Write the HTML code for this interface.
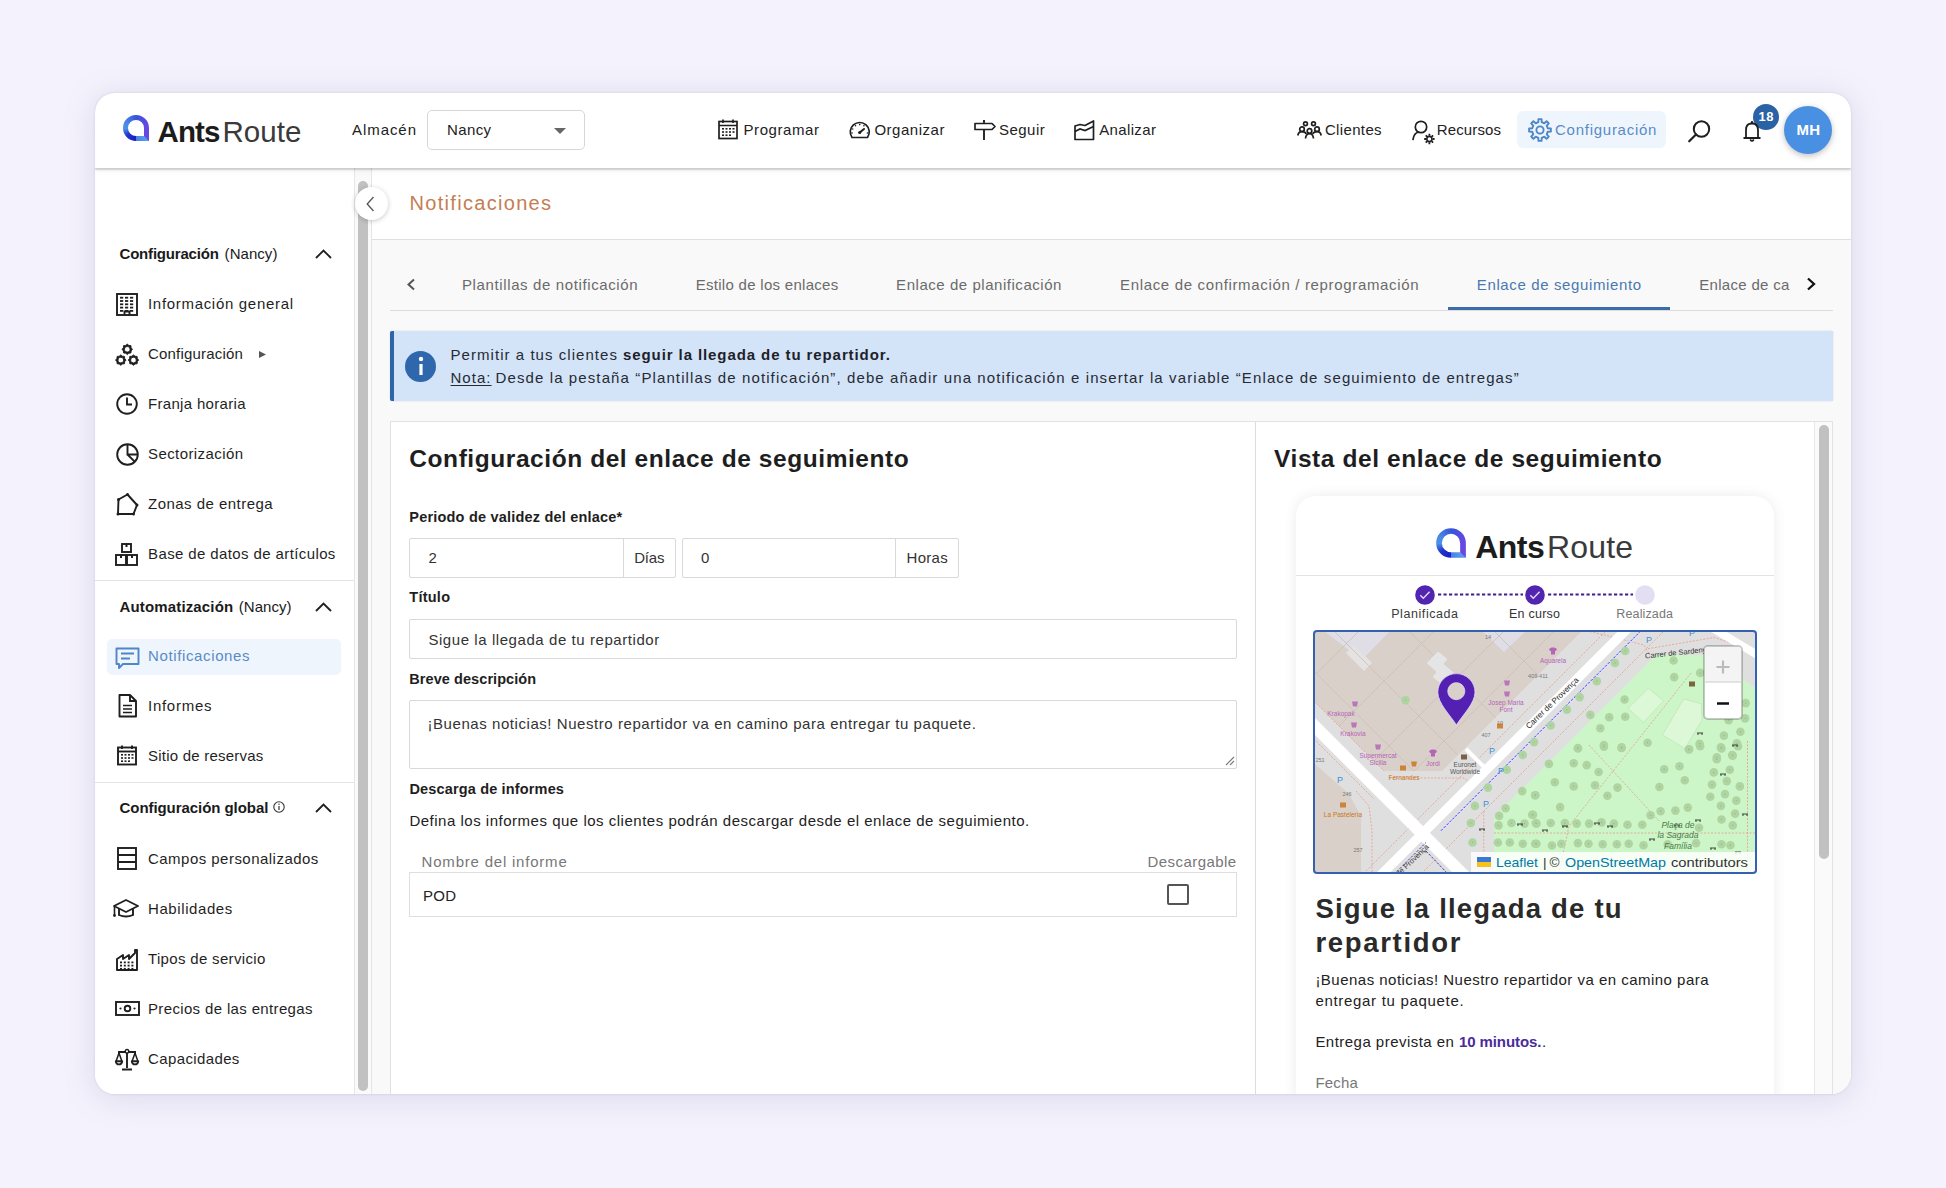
<!DOCTYPE html>
<html><head><meta charset="utf-8">
<style>
*{box-sizing:border-box;margin:0;padding:0}
html,body{width:1946px;height:1188px;overflow:hidden;background:#f4f2fc;font-family:"Liberation Sans",sans-serif;color:#1f1f1f}
.t{position:absolute;white-space:pre;line-height:1;z-index:10}
.ic{position:absolute;overflow:visible;z-index:10}
.box{position:absolute;z-index:6}
#card{position:absolute;left:95px;top:93px;width:1756px;height:1001px;background:#fff;border-radius:20px;overflow:hidden;box-shadow:0 0 2.5px rgba(70,60,100,0.16),0 4px 30px rgba(150,140,190,0.25)}
#hdr{position:absolute;left:95px;top:93px;width:1756px;height:75px;background:#fff;box-shadow:0 1.5px 1.5px rgba(0,0,0,0.16),0 3px 6px rgba(0,0,0,0.05);z-index:5;border-radius:20px 20px 0 0}
#side{position:absolute;left:0;top:75px;width:260px;height:926px;background:#fff}
#strack{position:absolute;left:259px;top:75px;width:18px;height:926px;background:#fafafa;border-left:1px solid #e6e6e6;border-right:1px solid #e6e6e6}
#sthumb{position:absolute;left:263px;top:88px;width:10px;height:910px;background:#c1c1c1;border-radius:5px}
#content{position:absolute;left:277px;top:75px;width:1479px;height:926px;background:#f9f9f9}
#chead{position:absolute;left:0;top:0;width:1479px;height:72px;background:#fff;border-bottom:1px solid #e0e0e0}
#clip{position:absolute;left:95px;top:93px;width:1756px;height:1001px;overflow:hidden;border-radius:20px;z-index:3}
#inner{position:absolute;left:-95px;top:-93px;width:1946px;height:1188px}
</style></head>
<body>
<div id="card">
  <div id="side"></div>
  <div id="strack"></div>
  <div id="sthumb"></div>
  <div id="content">
    <div id="chead"></div>
  </div>
</div>
<div id="clip"><div id="inner">
<div id="hdr"></div>
<div class="box" style="left:122px;top:114px;width:28px;height:28px;background:conic-gradient(from 0deg at 50% 50%, #3556d8 0deg, #5a4be0 55deg, #6748e2 90deg, #6748e2 134deg, #5b9cee 136deg, #4a7fe6 178deg, #1a1dc6 181deg, #2233cc 230deg, #4a93e8 268deg, #4a86e4 300deg, #3556d8 360deg);clip-path:path(evenodd, 'M14.00 1.00A13.00 13.00 0 0 0 1.00 14.00A13.00 13.00 0 0 0 14.00 27.00H27.00V14.00A13.00 13.00 0 0 0 14.00 1.00ZM14.00 6.00A8.00 8.00 0 0 0 6.00 14.00A8.00 8.00 0 0 0 14.00 22.00H22.00V14.00A8.00 8.00 0 0 0 14.00 6.00Z');z-index:11"></div><div class="t" style="left:157.5px;top:117.4px;font-size:29.5px;font-weight:700;color:#1c1c1c;letter-spacing:-0.92px;">Ants</div><div class="t" style="left:222.5px;top:117.4px;font-size:29.5px;font-weight:400;color:#3a3a3a;letter-spacing:0.07px;">Route</div><div class="t" style="left:352.0px;top:122.3px;font-size:15px;font-weight:400;color:#222;letter-spacing:0.94px;">Almac&eacute;n</div><div class="box" style="left:427px;top:110px;width:158px;height:40px;border:1px solid #d6d6d6;border-radius:5px;background:#fff"></div><div class="t" style="left:447.0px;top:122.3px;font-size:15px;font-weight:400;color:#222;letter-spacing:0.37px;">Nancy</div><svg class="ic" style="left:554px;top:128px;" width="12" height="6" viewBox="0 0 12 6"><path d="M0 0H12L6 6Z" fill="#666"/></svg><svg class="ic" style="left:718px;top:119px;" width="20" height="21" viewBox="0 0 20 21"><rect x="1" y="2.5" width="18" height="17" fill="none" stroke="#1f1f1f" stroke-width="1.7"/><path d="M1 6.5H19" fill="none" stroke="#1f1f1f" stroke-width="1.7"/><path d="M5 0.5V4M15 0.5V4" fill="none" stroke="#1f1f1f" stroke-width="1.7"/>
<g fill="#1f1f1f"><rect x="4" y="9" width="2" height="1.6"/><rect x="7.5" y="9" width="2" height="1.6"/><rect x="11" y="9" width="2" height="1.6"/><rect x="14.5" y="9" width="2" height="1.6"/>
<rect x="4" y="12.2" width="2" height="1.6"/><rect x="7.5" y="12.2" width="2" height="1.6"/><rect x="11" y="12.2" width="2" height="1.6"/><rect x="14.5" y="12.2" width="2" height="1.6"/>
<rect x="4" y="15.4" width="2" height="1.6"/><rect x="7.5" y="15.4" width="2" height="1.6"/><rect x="11" y="15.4" width="2" height="1.6"/></g></svg><div class="t" style="left:743.5px;top:122.0px;font-size:15px;font-weight:400;color:#222;letter-spacing:0.58px;">Programar</div><svg class="ic" style="left:849px;top:121px;" width="22" height="18" viewBox="0 0 22 18"><path d="M3 16.5A9.5 9.5 0 1 1 18.5 16.5Z" fill="none" stroke="#1f1f1f" stroke-width="1.7" stroke-linejoin="round"/><path d="M10.7 11.5L15 8" stroke="#1f1f1f" stroke-width="2" stroke-linecap="round"/><circle cx="10.7" cy="11.5" r="1.6" fill="#1f1f1f"/>
<g fill="#1f1f1f"><circle cx="10.7" cy="3.6" r=".8"/><circle cx="6.5" cy="4.8" r=".8"/><circle cx="14.9" cy="4.8" r=".8"/><circle cx="3.7" cy="8" r=".8"/><circle cx="3" cy="12" r=".8"/><circle cx="18.4" cy="12" r=".8"/></g></svg><svg class="ic" style="left:974px;top:120px;" width="22" height="20" viewBox="0 0 22 20"><path d="M1 3.5H18L21 6.5L18 9.5H1Z" fill="none" stroke="#1f1f1f" stroke-width="1.7" stroke-linejoin="round"/><path d="M10 0V3.5M10 9.5V20" stroke="#1f1f1f" stroke-width="1.9"/></svg><div class="t" style="left:999.0px;top:122.1px;font-size:15px;font-weight:400;color:#222;letter-spacing:0.47px;">Seguir</div><svg class="ic" style="left:1074px;top:120px;" width="21" height="21" viewBox="0 0 21 21"><path d="M1 6L6 4.5L11 5.5L19.5 1V19.5H1Z" fill="none" stroke="#1f1f1f" stroke-width="1.7" stroke-linejoin="round"/><path d="M1 11.5L6 9L11 10.5L19.5 6.5" fill="none" stroke="#1f1f1f" stroke-width="1.7"/></svg><div class="t" style="left:874.4px;top:122.0px;font-size:15px;font-weight:400;color:#222;letter-spacing:0.52px;">Organizar</div><div class="t" style="left:1099.2px;top:122.1px;font-size:15px;font-weight:400;color:#222;letter-spacing:0.36px;">Analizar</div><svg class="ic" style="left:1297px;top:121px;" width="25" height="18" viewBox="0 0 25 18"><g fill="none" stroke="#1f1f1f" stroke-width="1.7"><circle cx="8.5" cy="2.8" r="1.9"/><circle cx="16.5" cy="2.8" r="1.9"/><circle cx="5" cy="8.2" r="2.3"/><circle cx="12.5" cy="10" r="2.3"/><circle cx="20" cy="8.2" r="2.3"/>
<path d="M0.8 14.5Q1.5 10.7 5 10.7Q8.5 10.7 9.2 13"/><path d="M24.2 14.5Q23.5 10.7 20 10.7Q16.5 10.7 15.8 13"/><path d="M8.5 17.5Q9 12.7 12.5 12.7Q16 12.7 16.5 17.5"/></g></svg><div class="t" style="left:1324.9px;top:121.8px;font-size:15px;font-weight:400;color:#222;letter-spacing:0.36px;">Clientes</div><svg class="ic" style="left:1412px;top:120px;" width="24" height="25" viewBox="0 0 24 25"><circle cx="9" cy="7" r="5.7" fill="none" stroke="#1f1f1f" stroke-width="1.7"/><path d="M1 19.5Q2 13 6.5 12" fill="none" stroke="#1f1f1f" stroke-width="1.7" stroke-linecap="round"/>
<g transform="translate(17.4,19)"><circle r="2.6" fill="none" stroke="#1f1f1f" stroke-width="1.6"/><g stroke="#1f1f1f" stroke-width="1.8"><path d="M0 -5.2V-3.3M0 3.3V5.2M-5.2 0H-3.3M3.3 0H5.2M-3.7 -3.7L-2.4 -2.4M2.4 2.4L3.7 3.7M-3.7 3.7L-2.4 2.4M2.4 -2.4L3.7 -3.7"/></g></g></svg><div class="t" style="left:1436.8px;top:121.8px;font-size:15px;font-weight:400;color:#222;letter-spacing:0.12px;">Recursos</div><div class="box" style="left:1517px;top:111px;width:149px;height:37px;background:#eef5fd;border-radius:6px"></div><svg class="ic" style="left:1528px;top:118px;" width="24" height="24" viewBox="0 0 24 24"><path d="M10.29 4.19 L10.45 1.11 L13.55 1.11 L13.71 4.19 L16.31 5.26 L18.60 3.20 L20.80 5.40 L18.74 7.69 L19.81 10.29 L22.89 10.45 L22.89 13.55 L19.81 13.71 L18.74 16.31 L20.80 18.60 L18.60 20.80 L16.31 18.74 L13.71 19.81 L13.55 22.89 L10.45 22.89 L10.29 19.81 L7.69 18.74 L5.40 20.80 L3.20 18.60 L5.26 16.31 L4.19 13.71 L1.11 13.55 L1.11 10.45 L4.19 10.29 L5.26 7.69 L3.20 5.40 L5.40 3.20 L7.69 5.26Z" fill="none" stroke="#4f86c6" stroke-width="1.9" stroke-linejoin="round"/><circle cx="12" cy="12" r="3.6" fill="none" stroke="#4f86c6" stroke-width="1.9"/></svg><div class="t" style="left:1555.0px;top:122.3px;font-size:15px;font-weight:400;color:#5a8bc8;letter-spacing:0.74px;">Configuraci&oacute;n</div><svg class="ic" style="left:1688px;top:120px;" width="23" height="23" viewBox="0 0 23 23"><circle cx="13.5" cy="9" r="7.7" fill="none" stroke="#1f1f1f" stroke-width="2"/><path d="M8 14.5L1.2 21.3" stroke="#1f1f1f" stroke-width="2.2" stroke-linecap="round"/></svg><svg class="ic" style="left:1743px;top:120px;" width="18" height="23" viewBox="0 0 18 23"><path d="M3 17.5V10Q3 3.5 9 3.5Q15 3.5 15 10V17.5" fill="none" stroke="#1f1f1f" stroke-width="1.8"/><path d="M0.5 18H17.5" stroke="#1f1f1f" stroke-width="1.8"/><circle cx="9" cy="2.3" r="1.2" fill="#1f1f1f"/><path d="M7.2 19.5Q9 22.5 10.8 19.5" fill="none" stroke="#1f1f1f" stroke-width="1.6"/></svg><div class="box" style="left:1753px;top:104px;width:26px;height:26px;border-radius:50%;background:#2a62a6"></div><div class="t" style="left:1758.5px;top:109.6px;font-size:13px;font-weight:700;color:#fff;letter-spacing:0.53px;">18</div><div class="box" style="left:1784px;top:106px;width:48px;height:48px;border-radius:50%;background:#4a90e2;box-shadow:0 2px 6px rgba(0,0,0,0.25)"></div><div class="t" style="left:1796.5px;top:122.1px;font-size:15px;font-weight:700;color:#fff;letter-spacing:0.17px;">MH</div>
<div class="t" style="left:119.5px;top:246.0px;font-size:15px;font-weight:700;color:#1a1a1a;letter-spacing:-0.19px;">Configuraci&oacute;n</div><div class="t" style="left:224.6px;top:246.0px;font-size:15px;font-weight:400;color:#1a1a1a;letter-spacing:0.05px;">(Nancy)</div><svg class="ic" style="left:315px;top:248.7px;" width="17" height="10" viewBox="0 0 17 10"><path d="M1 9L8.5 1.5L16 9" fill="none" stroke="#1f1f1f" stroke-width="1.8"/></svg><div class="t" style="left:148.0px;top:296.1px;font-size:15px;font-weight:400;color:#1f1f1f;letter-spacing:0.69px;">Informaci&oacute;n general</div><div class="t" style="left:148.0px;top:346.1px;font-size:15px;font-weight:400;color:#1f1f1f;letter-spacing:0.20px;">Configuraci&oacute;n</div><div class="t" style="left:148.0px;top:396.1px;font-size:15px;font-weight:400;color:#1f1f1f;letter-spacing:0.32px;">Franja horaria</div><div class="t" style="left:148.0px;top:446.1px;font-size:15px;font-weight:400;color:#1f1f1f;letter-spacing:0.42px;">Sectorizaci&oacute;n</div><div class="t" style="left:148.0px;top:496.1px;font-size:15px;font-weight:400;color:#1f1f1f;letter-spacing:0.47px;">Zonas de entrega</div><div class="t" style="left:148.0px;top:546.1px;font-size:15px;font-weight:400;color:#1f1f1f;letter-spacing:0.39px;">Base de datos de art&iacute;culos</div><div class="box" style="left:95px;top:580px;width:259px;height:1px;background:#e3e3e3"></div><div class="t" style="left:119.5px;top:598.9px;font-size:15px;font-weight:700;color:#1a1a1a;letter-spacing:0.15px;">Automatizaci&oacute;n</div><div class="t" style="left:238.8px;top:598.9px;font-size:15px;font-weight:400;color:#1a1a1a;letter-spacing:0.03px;">(Nancy)</div><svg class="ic" style="left:315px;top:601.6px;" width="17" height="10" viewBox="0 0 17 10"><path d="M1 9L8.5 1.5L16 9" fill="none" stroke="#1f1f1f" stroke-width="1.8"/></svg><div class="box" style="left:107px;top:639px;width:234px;height:36px;background:#eef5fd;border-radius:5px"></div><div class="t" style="left:148.0px;top:648.1px;font-size:15px;font-weight:400;color:#5a8bc8;letter-spacing:0.63px;">Notificaciones</div><div class="t" style="left:148.0px;top:698.1px;font-size:15px;font-weight:400;color:#1f1f1f;letter-spacing:0.73px;">Informes</div><div class="t" style="left:148.0px;top:748.1px;font-size:15px;font-weight:400;color:#1f1f1f;letter-spacing:0.22px;">Sitio de reservas</div><div class="box" style="left:95px;top:782px;width:259px;height:1px;background:#e3e3e3"></div><div class="t" style="left:119.5px;top:800.0px;font-size:15px;font-weight:700;color:#1a1a1a;letter-spacing:-0.06px;">Configuraci&oacute;n global</div><svg class="ic" style="left:315px;top:802.7px;" width="17" height="10" viewBox="0 0 17 10"><path d="M1 9L8.5 1.5L16 9" fill="none" stroke="#1f1f1f" stroke-width="1.8"/></svg><svg class="ic" style="left:273px;top:801px;" width="12" height="12" viewBox="0 0 12 12"><circle cx="6" cy="6" r="5.2" fill="none" stroke="#333" stroke-width="1.1"/><path d="M6 5V9" stroke="#333" stroke-width="1.2"/><circle cx="6" cy="3.3" r=".7" fill="#333"/></svg><div class="t" style="left:148.0px;top:850.8px;font-size:15px;font-weight:400;color:#1f1f1f;letter-spacing:0.47px;">Campos personalizados</div><div class="t" style="left:148.0px;top:900.8px;font-size:15px;font-weight:400;color:#1f1f1f;letter-spacing:0.59px;">Habilidades</div><div class="t" style="left:148.0px;top:950.8px;font-size:15px;font-weight:400;color:#1f1f1f;letter-spacing:0.33px;">Tipos de servicio</div><div class="t" style="left:148.0px;top:1000.8px;font-size:15px;font-weight:400;color:#1f1f1f;letter-spacing:0.35px;">Precios de las entregas</div><div class="t" style="left:148.0px;top:1050.8px;font-size:15px;font-weight:400;color:#1f1f1f;letter-spacing:0.38px;">Capacidades</div><svg class="ic" style="left:116px;top:293px;" width="22" height="23" viewBox="0 0 22 23"><rect x="1" y="1" width="20" height="21" fill="none" stroke="#1f1f1f" stroke-width="1.9"/><g fill="#1f1f1f"><rect x="4" y="3.8" width="3.2" height="1.8"/><rect x="9" y="3.8" width="3.2" height="1.8"/><rect x="14" y="3.8" width="3.2" height="1.8"/><rect x="4" y="7.1" width="3.2" height="1.8"/><rect x="9" y="7.1" width="3.2" height="1.8"/><rect x="14" y="7.1" width="3.2" height="1.8"/><rect x="4" y="10.399999999999999" width="3.2" height="1.8"/><rect x="9" y="10.399999999999999" width="3.2" height="1.8"/><rect x="14" y="10.399999999999999" width="3.2" height="1.8"/><rect x="4" y="13.7" width="3.2" height="1.8"/><rect x="9" y="13.7" width="3.2" height="1.8"/><rect x="14" y="13.7" width="3.2" height="1.8"/><rect x="4" y="17.0" width="3.2" height="1.8"/><rect x="9" y="17.0" width="3.2" height="1.8"/><rect x="14" y="17.0" width="3.2" height="1.8"/></g><path d="M8.5 22V18.5H13.5V22" fill="none" stroke="#1f1f1f" stroke-width="1.9"/></svg><svg class="ic" style="left:116px;top:343px;" width="23" height="23" viewBox="0 0 23 23"><path d="M11.25 1.10 L12.86 2.42 L14.93 2.62 L15.13 4.69 L16.45 6.30 L15.13 7.91 L14.93 9.98 L12.86 10.18 L11.25 11.50 L9.64 10.18 L7.57 9.98 L7.37 7.91 L6.05 6.30 L7.37 4.69 L7.57 2.62 L9.64 2.42ZM11.25 3.5A2.8 2.8 0 1 0 11.26 3.5Z" fill="#1f1f1f" fill-rule="evenodd" stroke="#1f1f1f" stroke-width="0.9" stroke-linejoin="round"/><path d="M4.80 11.90 L6.41 13.22 L8.48 13.42 L8.68 15.49 L10.00 17.10 L8.68 18.71 L8.48 20.78 L6.41 20.98 L4.80 22.30 L3.19 20.98 L1.12 20.78 L0.92 18.71 L-0.40 17.10 L0.92 15.49 L1.12 13.42 L3.19 13.22ZM4.8 14.3A2.8 2.8 0 1 0 4.81 14.3Z" fill="#1f1f1f" fill-rule="evenodd" stroke="#1f1f1f" stroke-width="0.9" stroke-linejoin="round"/><path d="M17.45 11.90 L19.06 13.22 L21.13 13.42 L21.33 15.49 L22.65 17.10 L21.33 18.71 L21.13 20.78 L19.06 20.98 L17.45 22.30 L15.84 20.98 L13.77 20.78 L13.57 18.71 L12.25 17.10 L13.57 15.49 L13.77 13.42 L15.84 13.22ZM17.45 14.3A2.8 2.8 0 1 0 17.46 14.3Z" fill="#1f1f1f" fill-rule="evenodd" stroke="#1f1f1f" stroke-width="0.9" stroke-linejoin="round"/></svg><svg class="ic" style="left:258px;top:350px;" width="9" height="9" viewBox="0 0 9 9"><path d="M1 1L8 4.5L1 8Z" fill="#555"/></svg><svg class="ic" style="left:116px;top:393px;" width="22" height="22" viewBox="0 0 22 22"><circle cx="11" cy="11" r="9.8" fill="none" stroke="#1f1f1f" stroke-width="1.9"/><path d="M11 4.5V11.5H16" fill="none" stroke="#1f1f1f" stroke-width="1.9"/></svg><svg class="ic" style="left:116px;top:443px;" width="23" height="23" viewBox="0 0 23 23"><circle cx="11.5" cy="11.5" r="10.3" fill="none" stroke="#1f1f1f" stroke-width="1.9"/><path d="M11.5 1.2V11.5H21.8M11.5 11.5L18.7 18.7" fill="none" stroke="#1f1f1f" stroke-width="1.9"/></svg><svg class="ic" style="left:116px;top:493px;" width="23" height="23" viewBox="0 0 23 23"><path d="M2 21L2.5 6.5L11.5 1.5L21 12L17.5 21Z" fill="none" stroke="#1f1f1f" stroke-width="1.9" stroke-linejoin="round"/><g fill="#1f1f1f"><circle cx="2" cy="21" r="1.5"/><circle cx="2.5" cy="6.5" r="1.5"/><circle cx="11.5" cy="1.5" r="1.5"/><circle cx="21" cy="12" r="1.5"/><circle cx="17.5" cy="21" r="1.5"/></g></svg><svg class="ic" style="left:115px;top:543px;" width="24" height="24" viewBox="0 0 24 24"><g fill="none" stroke="#1f1f1f" stroke-width="1.9"><rect x="7" y="1" width="9" height="8"/><rect x="1" y="12" width="10" height="10"/><rect x="12" y="12" width="10" height="10"/></g><g fill="#1f1f1f"><rect x="10.5" y="1" width="2" height="3"/><rect x="5" y="12" width="2" height="3"/><rect x="16" y="12" width="2" height="3"/></g></svg><svg class="ic" style="left:115px;top:647px;" width="25" height="23" viewBox="0 0 25 23"><path d="M1.5 1.5H23.5V17H8L4 21V17H1.5Z" fill="none" stroke="#4f86c6" stroke-width="1.9" stroke-linejoin="round"/><path d="M6 6.5H19M6 11.5H15" stroke="#4f86c6" stroke-width="1.9"/></svg><svg class="ic" style="left:118px;top:694px;" width="20" height="24" viewBox="0 0 20 24"><path d="M1.5 1H12L18 7V22.5H1.5Z" fill="none" stroke="#1f1f1f" stroke-width="1.9" stroke-linejoin="round"/><path d="M12 1V7H18" fill="none" stroke="#1f1f1f" stroke-width="1.9"/><path d="M5 11.5H14M5 15H14M5 18.5H14" stroke="#1f1f1f" stroke-width="1.5"/></svg><svg class="ic" style="left:117px;top:745px;" width="20" height="21" viewBox="0 0 20 21"><rect x="1" y="2.5" width="18" height="17" fill="none" stroke="#1f1f1f" stroke-width="1.9"/><path d="M1 6.5H19" fill="none" stroke="#1f1f1f" stroke-width="1.9"/><path d="M5 0.5V4M15 0.5V4" fill="none" stroke="#1f1f1f" stroke-width="1.9"/>
<g fill="#1f1f1f"><rect x="4" y="9" width="2" height="1.6"/><rect x="7.5" y="9" width="2" height="1.6"/><rect x="11" y="9" width="2" height="1.6"/><rect x="14.5" y="9" width="2" height="1.6"/>
<rect x="4" y="12.2" width="2" height="1.6"/><rect x="7.5" y="12.2" width="2" height="1.6"/><rect x="11" y="12.2" width="2" height="1.6"/><rect x="14.5" y="12.2" width="2" height="1.6"/>
<rect x="4" y="15.4" width="2" height="1.6"/><rect x="7.5" y="15.4" width="2" height="1.6"/><rect x="11" y="15.4" width="2" height="1.6"/></g></svg><svg class="ic" style="left:117px;top:847px;" width="20" height="23" viewBox="0 0 20 23"><rect x="1" y="1" width="18" height="21" fill="none" stroke="#1f1f1f" stroke-width="1.9"/><path d="M1 8H19M1 15H19" fill="none" stroke="#1f1f1f" stroke-width="1.9"/></svg><svg class="ic" style="left:113px;top:898px;" width="26" height="20" viewBox="0 0 26 20"><path d="M1 8L13 2L25 8L13 14Z" fill="none" stroke="#1f1f1f" stroke-width="1.9" stroke-linejoin="round"/><path d="M6 11V17Q13 20 20 17V11" fill="none" stroke="#1f1f1f" stroke-width="1.9"/><path d="M1.5 8.5V17" stroke="#1f1f1f" stroke-width="1.6"/><circle cx="1.5" cy="17.5" r="1.4" fill="#1f1f1f"/></svg><svg class="ic" style="left:116px;top:949px;" width="23" height="23" viewBox="0 0 23 23"><path d="M1 21V10L7 6V10L13 6V10L19 4V1H21V21Z" fill="none" stroke="#1f1f1f" stroke-width="1.9" stroke-linejoin="round"/><g fill="#1f1f1f"><rect x="4.0" y="12.5" width="2" height="1.8"/><rect x="7.8" y="12.5" width="2" height="1.8"/><rect x="11.6" y="12.5" width="2" height="1.8"/><rect x="15.399999999999999" y="12.5" width="2" height="1.8"/><rect x="4.0" y="15.7" width="2" height="1.8"/><rect x="7.8" y="15.7" width="2" height="1.8"/><rect x="11.6" y="15.7" width="2" height="1.8"/><rect x="15.399999999999999" y="15.7" width="2" height="1.8"/><rect x="4.0" y="18.9" width="2" height="1.8"/><rect x="7.8" y="18.9" width="2" height="1.8"/><rect x="11.6" y="18.9" width="2" height="1.8"/><rect x="15.399999999999999" y="18.9" width="2" height="1.8"/></g></svg><svg class="ic" style="left:115px;top:1001px;" width="25" height="15" viewBox="0 0 25 15"><rect x="1" y="1" width="23" height="13" fill="none" stroke="#1f1f1f" stroke-width="1.9"/><circle cx="12.5" cy="7.5" r="2.8" fill="none" stroke="#1f1f1f" stroke-width="1.9"/><circle cx="5.5" cy="7.5" r="1.1" fill="#1f1f1f"/><circle cx="19.5" cy="7.5" r="1.1" fill="#1f1f1f"/></svg><svg class="ic" style="left:115px;top:1048px;" width="24" height="22" viewBox="0 0 24 22"><path d="M12 3V20M7 21.5H17M3 4H21" fill="none" stroke="#1f1f1f" stroke-width="1.9"/><circle cx="12" cy="3.3" r="1.8" fill="#fff" stroke="#1f1f1f" stroke-width="1.4"/><path d="M4 5L1.2 13M4 5L6.8 13M20 5L17.2 13M20 5L22.8 13" stroke="#1f1f1f" stroke-width="1.5"/><path d="M0.8 13.2A3.2 3.2 0 0 0 7.2 13.2ZM16.8 13.2A3.2 3.2 0 0 0 23.2 13.2Z" fill="none" stroke="#1f1f1f" stroke-width="1.9" stroke-linejoin="round"/></svg>
<div class="box" style="left:355px;top:187px;width:33px;height:33px;border-radius:50%;background:#fff;box-shadow:0 1px 5px rgba(0,0,0,0.22);z-index:12"></div><svg class="ic" style="left:366px;top:196px;z-index:13" width="9" height="16" viewBox="0 0 9 16"><path d="M7.5 1L1.2 8L7.5 15" fill="none" stroke="#555" stroke-width="1.3"/></svg><div class="t" style="left:409.5px;top:192.9px;font-size:20px;font-weight:400;color:#c57d52;letter-spacing:1.31px;">Notificaciones</div><svg class="ic" style="left:406px;top:278px;" width="10" height="13" viewBox="0 0 10 13"><path d="M8 1.5L2.5 6.5L8 11.5" fill="none" stroke="#555" stroke-width="2"/></svg><div class="t" style="left:462.0px;top:277.1px;font-size:15px;font-weight:400;color:#6b6b6b;letter-spacing:0.62px;">Plantillas de notificaci&oacute;n</div><div class="t" style="left:695.7px;top:277.1px;font-size:15px;font-weight:400;color:#6b6b6b;letter-spacing:0.29px;">Estilo de los enlaces</div><div class="t" style="left:896.1px;top:277.1px;font-size:15px;font-weight:400;color:#6b6b6b;letter-spacing:0.54px;">Enlace de planificaci&oacute;n</div><div class="t" style="left:1120.0px;top:277.1px;font-size:15px;font-weight:400;color:#6b6b6b;letter-spacing:0.66px;">Enlace de confirmaci&oacute;n / reprogramaci&oacute;n</div><div class="t" style="left:1476.8px;top:277.1px;font-size:15px;font-weight:400;color:#4a78b2;letter-spacing:0.63px;">Enlace de seguimiento</div><div class="t" style="left:1699.2px;top:277.1px;font-size:15px;font-weight:400;color:#6b6b6b;letter-spacing:0.32px;">Enlace de ca</div><svg class="ic" style="left:1806px;top:277px;" width="11" height="14" viewBox="0 0 11 14"><path d="M2 1.5L8 7L2 12.5" fill="none" stroke="#111" stroke-width="2.3"/></svg><div class="box" style="left:390px;top:310px;width:1443px;height:1px;background:#dcdcdc"></div><div class="box" style="left:1448px;top:307px;width:222px;height:3px;background:#3c6ca9"></div><div class="box" style="left:390px;top:331px;width:1443px;height:70px;background:#d3e3f8;border-left:4px solid #2f64a8;border-radius:2px;box-shadow:0 0 1.2px rgba(40,60,100,0.35)"></div><div class="box" style="left:405px;top:351px;width:31px;height:31px;border-radius:50%;background:#2f67ad"></div><svg class="ic" style="left:417px;top:356px;" width="8" height="21" viewBox="0 0 8 21"><circle cx="4" cy="3" r="2.2" fill="#fff"/><path d="M4 8V19" stroke="#fff" stroke-width="3.2"/></svg><div class="t" style="left:450.5px;top:347.4px;font-size:15px;font-weight:400;color:#262b33;letter-spacing:1.05px;">Permitir a tus clientes</div><div class="t" style="left:623.0px;top:347.4px;font-size:15px;font-weight:700;color:#1d2128;letter-spacing:0.91px;">seguir la llegada de tu repartidor.</div><div class="t" style="left:450.5px;top:370.3px;font-size:15px;font-weight:400;color:#262b33;letter-spacing:1.04px;text-decoration:underline;text-underline-offset:2px">Nota:</div><div class="t" style="left:495.5px;top:370.3px;font-size:15px;font-weight:400;color:#262b33;letter-spacing:1.11px;">Desde la pesta&ntilde;a &ldquo;Plantillas de notificaci&oacute;n&rdquo;, debe a&ntilde;adir una notificaci&oacute;n e insertar la variable &ldquo;Enlace de seguimiento de entregas&rdquo;</div><div class="box" style="left:390px;top:421px;width:866px;height:680px;background:#fff;border:1px solid #e2e2e2"></div><div class="t" style="left:409.3px;top:447.3px;font-size:24.5px;font-weight:700;color:#1e1e1e;letter-spacing:0.57px;">Configuraci&oacute;n del enlace de seguimiento</div><div class="t" style="left:409.3px;top:510.2px;font-size:14.5px;font-weight:700;color:#1e1e1e;letter-spacing:0.20px;">Periodo de validez del enlace*</div><div class="box" style="left:409px;top:538px;width:267px;height:40px;background:#fff;border:1px solid #d9d9d9;border-radius:2px"></div><div class="box" style="left:623px;top:539px;width:1px;height:38px;background:#d9d9d9"></div><div class="t" style="left:428.4px;top:550.0px;font-size:15px;font-weight:400;color:#333;letter-spacing:0.00px;">2</div><div class="t" style="left:634.2px;top:550.0px;font-size:15px;font-weight:400;color:#333;letter-spacing:-0.18px;">D&iacute;as</div><div class="box" style="left:682px;top:538px;width:277px;height:40px;background:#fff;border:1px solid #d9d9d9;border-radius:2px"></div><div class="box" style="left:895px;top:539px;width:1px;height:38px;background:#d9d9d9"></div><div class="t" style="left:701.1px;top:550.0px;font-size:15px;font-weight:400;color:#333;letter-spacing:0.00px;">0</div><div class="t" style="left:906.6px;top:550.0px;font-size:15px;font-weight:400;color:#333;letter-spacing:0.27px;">Horas</div><div class="t" style="left:409.3px;top:590.4px;font-size:14.5px;font-weight:700;color:#1e1e1e;letter-spacing:0.25px;">T&iacute;tulo</div><div class="box" style="left:409px;top:619px;width:828px;height:40px;background:#fff;border:1px solid #d9d9d9;border-radius:2px"></div><div class="t" style="left:428.4px;top:631.5px;font-size:15px;font-weight:400;color:#333;letter-spacing:0.57px;">Sigue la llegada de tu repartidor</div><div class="t" style="left:409.3px;top:672.3px;font-size:14.5px;font-weight:700;color:#1e1e1e;letter-spacing:0.07px;">Breve descripci&oacute;n</div><div class="box" style="left:409px;top:700px;width:828px;height:69px;background:#fff;border:1px solid #d9d9d9;border-radius:2px"></div><svg class="ic" style="left:1225px;top:756px;" width="10" height="10" viewBox="0 0 10 10"><path d="M9 1L1 9M9 5L5 9" stroke="#777" stroke-width="1.1"/></svg><div class="t" style="left:427.5px;top:715.7px;font-size:15px;font-weight:400;color:#333;letter-spacing:0.56px;">&iexcl;Buenas noticias! Nuestro repartidor va en camino para entregar tu paquete.</div><div class="t" style="left:409.4px;top:781.7px;font-size:14.5px;font-weight:700;color:#1e1e1e;letter-spacing:0.16px;">Descarga de informes</div><div class="t" style="left:409.4px;top:813.0px;font-size:15px;font-weight:400;color:#222;letter-spacing:0.51px;">Defina los informes que los clientes podr&aacute;n descargar desde el enlace de seguimiento.</div><div class="t" style="left:421.6px;top:853.7px;font-size:15px;font-weight:400;color:#777;letter-spacing:0.79px;">Nombre del informe</div><div class="t" style="left:1147.5px;top:853.7px;font-size:15px;font-weight:400;color:#777;letter-spacing:0.45px;">Descargable</div><div class="box" style="left:409px;top:872px;width:828px;height:45px;background:#fff;border:1px solid #dedede"></div><div class="t" style="left:423.0px;top:887.6px;font-size:15px;font-weight:400;color:#222;letter-spacing:0.24px;">POD</div><div class="box" style="left:1167px;top:884px;width:22px;height:21px;border:2px solid #555;border-radius:2px;background:#fff"></div><div class="box" style="left:1255px;top:421px;width:578px;height:680px;background:#fff;border:1px solid #e2e2e2;border-left:1px solid #dcdcdc"></div><div class="box" style="left:1814px;top:422px;width:18px;height:680px;background:#fafafa;border-left:1px solid #e8e8e8"></div><div class="box" style="left:1819px;top:425px;width:9.5px;height:434px;background:#c1c1c1;border-radius:5px"></div><div class="t" style="left:1274.0px;top:447.1px;font-size:24.5px;font-weight:700;color:#1e1e1e;letter-spacing:0.59px;">Vista del enlace de seguimiento</div><div class="box" style="left:1296px;top:496px;width:478px;height:620px;background:#fff;border-radius:20px;box-shadow:0 0 14px rgba(0,0,0,0.08)"></div><div class="box" style="left:1435px;top:527px;width:32px;height:32px;background:conic-gradient(from 0deg at 50% 50%, #3556d8 0deg, #5a4be0 55deg, #6748e2 90deg, #6748e2 134deg, #5b9cee 136deg, #4a7fe6 178deg, #1a1dc6 181deg, #2233cc 230deg, #4a93e8 268deg, #4a86e4 300deg, #3556d8 360deg);clip-path:path(evenodd, 'M16.00 1.14A14.86 14.86 0 0 0 1.14 16.00A14.86 14.86 0 0 0 16.00 30.86H30.86V16.00A14.86 14.86 0 0 0 16.00 1.14ZM16.00 6.86A9.14 9.14 0 0 0 6.86 16.00A9.14 9.14 0 0 0 16.00 25.14H25.14V16.00A9.14 9.14 0 0 0 16.00 6.86Z');z-index:11"></div><div class="t" style="left:1475.2px;top:531.0px;font-size:32px;font-weight:700;color:#1c1c1c;letter-spacing:-0.54px;">Ants</div><div class="t" style="left:1547.0px;top:531.0px;font-size:32px;font-weight:400;color:#3a3a3a;letter-spacing:0.15px;">Route</div><div class="box" style="left:1296px;top:575px;width:478px;height:1px;background:#e3e3e3"></div><svg class="ic" style="left:1437px;top:593px;" width="200" height="4" viewBox="0 0 200 4"><path d="M1 1.5H86M111 1.5H196" stroke="#3c2188" stroke-width="2.2" stroke-dasharray="3.2 2.3"/></svg><svg class="ic" style="left:1414.8px;top:585px;" width="20" height="20" viewBox="0 0 20 20"><circle cx="10" cy="10" r="9.8" fill="#5225b0"/><path d="M5.3 10.2L8.3 13.2L14.6 6.8" fill="none" stroke="#e4d8fb" stroke-width="1.4"/></svg><svg class="ic" style="left:1524.8px;top:585px;" width="20" height="20" viewBox="0 0 20 20"><circle cx="10" cy="10" r="9.8" fill="#5225b0"/><path d="M5.3 10.2L8.3 13.2L14.6 6.8" fill="none" stroke="#e4d8fb" stroke-width="1.4"/></svg><svg class="ic" style="left:1634.5px;top:585px;" width="20" height="20" viewBox="0 0 20 20"><circle cx="10" cy="10" r="9.8" fill="#e4def3"/></svg><div class="t" style="left:1391.2px;top:607.5px;font-size:12.5px;font-weight:400;color:#3a3a3a;letter-spacing:0.57px;">Planificada</div><div class="t" style="left:1509.0px;top:607.5px;font-size:12.5px;font-weight:400;color:#333;letter-spacing:0.24px;">En curso</div><div class="t" style="left:1616.3px;top:607.5px;font-size:12.5px;font-weight:400;color:#777;letter-spacing:0.14px;">Realizada</div><svg class="ic" style="left:1314px;top:631px;z-index:11" width="442" height="242" viewBox="0 0 442 242"><g clip-path="url(#mapclip)"><rect x="0" y="0" width="442" height="242" fill="#e0dfdf"/><polygon points="0,0 268,0 128,140 70,140 0,70" fill="#d9d0c9"/><polygon points="0,132 35,163 47,185 47,242 0,242" fill="#d9d0c9"/><polygon points="10,0 76,0 48,29" fill="#dfdde6"/><polygon points="168,0 212,0 190,21" fill="#dfdde6"/><polygon points="32,22 40,14 58,32 50,40" fill="#e4e2e2"/><defs><clipPath id="blk"><polygon points="0,0 268,0 128,140 70,140 0,70"/></clipPath><clipPath id="mapclip"><rect x="0" y="0" width="442" height="242" rx="3"/></clipPath></defs><g clip-path="url(#blk)" stroke="#cdbfb5" stroke-width="0.8"><line x1="0" y1="-180" x2="300" y2="120"/><line x1="0" y1="-95" x2="300" y2="205"/><line x1="0" y1="-20" x2="300" y2="280"/><line x1="0" y1="40" x2="300" y2="340"/><line x1="0" y1="45" x2="45" y2="0"/><line x1="0" y1="120" x2="120" y2="0"/><line x1="0" y1="190" x2="190" y2="0"/><line x1="0" y1="240" x2="240" y2="0"/></g><polygon points="112,32 124,20 134,28 130,33 141,42 128,54 118,46 122,41" fill="#e6e5e5" stroke="#cfc8c2" stroke-width="0.6"/><polygon points="180,242 180,186 342,24 398,24 442,58 442,242" fill="#cdf6c8"/><polygon points="314,77.4 334.2,57.3 349.6,69.7 329.5,91.6" fill="#dcf8d6" stroke="#bfe3b6" stroke-width="0.7"/><polygon points="348.4,104 369.7,67.9 387.4,72.7 388,89.2 370.8,117.6" fill="#dcf8d6" stroke="#bfe3b6" stroke-width="0.7"/><line x1="-10" y1="302" x2="302" y2="-10" fill="none" stroke="#e8a196" stroke-width="0.9" stroke-dasharray="2 1.5"/><line x1="110" y1="240" x2="360" y2="-10" fill="none" stroke="#e8a196" stroke-width="0.9" stroke-dasharray="2 1.5"/><line x1="0" y1="70" x2="70" y2="140" fill="none" stroke="#e8a196" stroke-width="0.9" stroke-dasharray="2 1.5"/><polyline points="75,147 150,147 158,153" fill="none" stroke="#e8a196" stroke-width="0.9" stroke-dasharray="2 1.5"/><line x1="0" y1="108" x2="60" y2="168" fill="none" stroke="#e8a196" stroke-width="0.9" stroke-dasharray="2 1.5"/><polyline points="42,160 55,175 58,200 58,242" fill="none" stroke="#e8a196" stroke-width="0.9" stroke-dasharray="2 1.5"/><line x1="275" y1="114" x2="346" y2="191" fill="none" stroke="#e8a196" stroke-width="0.9" stroke-dasharray="2 1.5"/><polyline points="377,42 308,129 255,195 245,242" fill="none" stroke="#e8a196" stroke-width="0.9" stroke-dasharray="2 1.5"/><line x1="180" y1="202" x2="442" y2="202" fill="none" stroke="#e8a196" stroke-width="0.9" stroke-dasharray="2 1.5"/><line x1="433.5" y1="110" x2="433.5" y2="242" fill="none" stroke="#e8a196" stroke-width="0.9" stroke-dasharray="2 1.5"/><line x1="169.8" y1="180" x2="169.8" y2="242" fill="none" stroke="#e8a196" stroke-width="0.9" stroke-dasharray="2 1.5"/><polyline points="334,17.7 400,6.5 442,20" fill="none" stroke="#e8a196" stroke-width="0.9" stroke-dasharray="2 1.5"/><polyline points="266,-2 330,14 336,24" fill="none" stroke="#e8a196" stroke-width="0.9" stroke-dasharray="2 1.5"/><line x1="-20" y1="331" x2="331" y2="-20" stroke="#ffffff" stroke-width="9.5"/><line x1="-20" y1="74.5" x2="230" y2="324.5" stroke="#ffffff" stroke-width="12"/><line x1="395" y1="-5" x2="450" y2="28" stroke="#ffffff" stroke-width="8"/><line x1="152" y1="118" x2="170" y2="136" stroke="#ffffff" stroke-width="4"/><line x1="127" y1="199.7" x2="336" y2="-9.3" stroke="#dfe0f8" stroke-width="3"/><line x1="127" y1="199.7" x2="336" y2="-9.3" stroke="#3b3fc0" stroke-width="1" stroke-dasharray="2.5 1.5"/><line x1="80" y1="243.5" x2="112" y2="211.5" stroke="#3b3fc0" stroke-width="1" stroke-dasharray="2.5 1.5"/><line x1="112" y1="220" x2="134" y2="243" stroke="#3b3fc0" stroke-width="1" stroke-dasharray="2.5 1.5"/><g fill="#afd4a2"><circle cx="311.2" cy="20.0" r="4.3"/><circle cx="300.9" cy="31.9" r="4.3"/><circle cx="282.8" cy="50.2" r="4.3"/><circle cx="265.6" cy="66.1" r="4.3"/><circle cx="252.9" cy="78.6" r="4.3"/><circle cx="236.7" cy="94.5" r="4.3"/><circle cx="220.1" cy="111.1" r="4.3"/><circle cx="359.6" cy="29.5" r="4.3"/><circle cx="386.2" cy="41.9" r="4.3"/><circle cx="360.2" cy="46.1" r="4.3"/><circle cx="310.6" cy="68.5" r="4.3"/><circle cx="295.2" cy="86.2" r="4.3"/><circle cx="311.2" cy="85.7" r="4.3"/><circle cx="276.3" cy="83.9" r="4.3"/><circle cx="286.3" cy="97.2" r="4.3"/><circle cx="263.9" cy="117.0" r="4.3"/><circle cx="289.9" cy="114.0" r="4.3"/><circle cx="307.6" cy="116.4" r="4.3"/><circle cx="333.6" cy="111.7" r="4.3"/><circle cx="431.7" cy="72.1" r="4.3"/><circle cx="431.1" cy="87.4" r="4.3"/><circle cx="414.6" cy="89.2" r="4.3"/><circle cx="409.9" cy="104.6" r="4.3"/><circle cx="426.4" cy="100.8" r="4.3"/><circle cx="385.6" cy="112.8" r="4.3"/><circle cx="375.0" cy="118.2" r="4.3"/><circle cx="406.9" cy="116.4" r="4.3"/><circle cx="422.9" cy="112.2" r="4.3"/><circle cx="418.1" cy="124.1" r="4.3"/><circle cx="402.8" cy="126.4" r="4.3"/><circle cx="263.9" cy="117.5" r="4.3"/><circle cx="289.9" cy="115.8" r="4.3"/><circle cx="307.6" cy="117.0" r="4.3"/><circle cx="234.9" cy="132.9" r="4.3"/><circle cx="259.7" cy="132.3" r="4.3"/><circle cx="272.7" cy="134.1" r="4.3"/><circle cx="284.6" cy="141.0" r="4.3"/><circle cx="240.8" cy="151.2" r="4.3"/><circle cx="259.7" cy="155.4" r="4.3"/><circle cx="281.0" cy="154.2" r="4.3"/><circle cx="303.5" cy="156.6" r="4.3"/><circle cx="221.3" cy="164.2" r="4.3"/><circle cx="293.4" cy="164.8" r="4.3"/><circle cx="246.1" cy="176.1" r="4.3"/><circle cx="219.0" cy="183.7" r="4.3"/><circle cx="222.5" cy="192.6" r="4.3"/><circle cx="236.7" cy="192.0" r="4.3"/><circle cx="250.9" cy="192.0" r="4.3"/><circle cx="262.7" cy="192.6" r="4.3"/><circle cx="275.1" cy="192.6" r="4.3"/><circle cx="287.5" cy="191.4" r="4.3"/><circle cx="299.9" cy="192.6" r="4.3"/><circle cx="313.5" cy="193.8" r="4.3"/><circle cx="328.3" cy="193.8" r="4.3"/><circle cx="336.6" cy="184.3" r="4.3"/><circle cx="346.6" cy="180.2" r="4.3"/><circle cx="361.4" cy="179.6" r="4.3"/><circle cx="373.8" cy="176.6" r="4.3"/><circle cx="345.4" cy="156.0" r="4.3"/><circle cx="350.2" cy="138.2" r="4.3"/><circle cx="365.5" cy="135.3" r="4.3"/><circle cx="370.8" cy="149.2" r="4.3"/><circle cx="402.8" cy="128.2" r="4.3"/><circle cx="418.7" cy="124.6" r="4.3"/><circle cx="399.8" cy="141.4" r="4.3"/><circle cx="415.8" cy="138.8" r="4.3"/><circle cx="398.0" cy="153.6" r="4.3"/><circle cx="412.8" cy="150.1" r="4.3"/><circle cx="425.8" cy="155.4" r="4.3"/><circle cx="396.3" cy="165.8" r="4.3"/><circle cx="411.0" cy="163.1" r="4.3"/><circle cx="422.3" cy="169.6" r="4.3"/><circle cx="406.9" cy="174.9" r="4.3"/><circle cx="421.1" cy="182.6" r="4.3"/><circle cx="407.5" cy="188.5" r="4.3"/><circle cx="418.7" cy="194.4" r="4.3"/><circle cx="385.0" cy="196.7" r="4.3"/><circle cx="222.5" cy="212.7" r="4.3"/><circle cx="237.9" cy="214.5" r="4.3"/><circle cx="247.3" cy="212.7" r="4.3"/><circle cx="263.9" cy="212.1" r="4.3"/><circle cx="274.5" cy="212.7" r="4.3"/><circle cx="288.7" cy="213.3" r="4.3"/><circle cx="302.9" cy="213.3" r="4.3"/><circle cx="314.7" cy="212.7" r="4.3"/><circle cx="329.5" cy="214.2" r="4.3"/><circle cx="353.7" cy="213.3" r="4.3"/><circle cx="382.1" cy="212.1" r="4.3"/><circle cx="407.5" cy="213.3" r="4.3"/><circle cx="416.4" cy="214.2" r="4.3"/><circle cx="375.0" cy="118.5" r="4.3"/><circle cx="386.2" cy="115.2" r="4.3"/><circle cx="407.5" cy="117.5" r="4.3"/><circle cx="424.0" cy="115.2" r="4.3"/><circle cx="208.8" cy="124.0" r="4.3"/><circle cx="192.8" cy="138.8" r="4.3"/><circle cx="173.9" cy="156.6" r="4.3"/><circle cx="160.9" cy="174.9" r="4.3"/><circle cx="191.6" cy="177.2" r="4.3"/><circle cx="185.1" cy="184.9" r="4.3"/><circle cx="208.2" cy="160.1" r="4.3"/><circle cx="221.2" cy="164.2" r="4.3"/><circle cx="218.2" cy="183.7" r="4.3"/><circle cx="156.8" cy="192.0" r="4.3"/><circle cx="184.5" cy="194.4" r="4.3"/><circle cx="197.5" cy="192.0" r="4.3"/><circle cx="210.5" cy="192.6" r="4.3"/><circle cx="221.8" cy="192.0" r="4.3"/><circle cx="158.5" cy="211.5" r="4.3"/><circle cx="183.9" cy="211.5" r="4.3"/><circle cx="195.8" cy="211.5" r="4.3"/><circle cx="208.8" cy="212.7" r="4.3"/><circle cx="221.2" cy="212.7" r="4.3"/><circle cx="91.5" cy="69.1" r="4.3"/></g><g fill="#8fbf80"><circle cx="311.2" cy="20.0" r="0.7"/><circle cx="300.9" cy="31.9" r="0.7"/><circle cx="282.8" cy="50.2" r="0.7"/><circle cx="265.6" cy="66.1" r="0.7"/><circle cx="252.9" cy="78.6" r="0.7"/><circle cx="236.7" cy="94.5" r="0.7"/><circle cx="220.1" cy="111.1" r="0.7"/><circle cx="359.6" cy="29.5" r="0.7"/><circle cx="386.2" cy="41.9" r="0.7"/><circle cx="360.2" cy="46.1" r="0.7"/><circle cx="310.6" cy="68.5" r="0.7"/><circle cx="295.2" cy="86.2" r="0.7"/><circle cx="311.2" cy="85.7" r="0.7"/><circle cx="276.3" cy="83.9" r="0.7"/><circle cx="286.3" cy="97.2" r="0.7"/><circle cx="263.9" cy="117.0" r="0.7"/><circle cx="289.9" cy="114.0" r="0.7"/><circle cx="307.6" cy="116.4" r="0.7"/><circle cx="333.6" cy="111.7" r="0.7"/><circle cx="431.7" cy="72.1" r="0.7"/><circle cx="431.1" cy="87.4" r="0.7"/><circle cx="414.6" cy="89.2" r="0.7"/><circle cx="409.9" cy="104.6" r="0.7"/><circle cx="426.4" cy="100.8" r="0.7"/><circle cx="385.6" cy="112.8" r="0.7"/><circle cx="375.0" cy="118.2" r="0.7"/><circle cx="406.9" cy="116.4" r="0.7"/><circle cx="422.9" cy="112.2" r="0.7"/><circle cx="418.1" cy="124.1" r="0.7"/><circle cx="402.8" cy="126.4" r="0.7"/><circle cx="263.9" cy="117.5" r="0.7"/><circle cx="289.9" cy="115.8" r="0.7"/><circle cx="307.6" cy="117.0" r="0.7"/><circle cx="234.9" cy="132.9" r="0.7"/><circle cx="259.7" cy="132.3" r="0.7"/><circle cx="272.7" cy="134.1" r="0.7"/><circle cx="284.6" cy="141.0" r="0.7"/><circle cx="240.8" cy="151.2" r="0.7"/><circle cx="259.7" cy="155.4" r="0.7"/><circle cx="281.0" cy="154.2" r="0.7"/><circle cx="303.5" cy="156.6" r="0.7"/><circle cx="221.3" cy="164.2" r="0.7"/><circle cx="293.4" cy="164.8" r="0.7"/><circle cx="246.1" cy="176.1" r="0.7"/><circle cx="219.0" cy="183.7" r="0.7"/><circle cx="222.5" cy="192.6" r="0.7"/><circle cx="236.7" cy="192.0" r="0.7"/><circle cx="250.9" cy="192.0" r="0.7"/><circle cx="262.7" cy="192.6" r="0.7"/><circle cx="275.1" cy="192.6" r="0.7"/><circle cx="287.5" cy="191.4" r="0.7"/><circle cx="299.9" cy="192.6" r="0.7"/><circle cx="313.5" cy="193.8" r="0.7"/><circle cx="328.3" cy="193.8" r="0.7"/><circle cx="336.6" cy="184.3" r="0.7"/><circle cx="346.6" cy="180.2" r="0.7"/><circle cx="361.4" cy="179.6" r="0.7"/><circle cx="373.8" cy="176.6" r="0.7"/><circle cx="345.4" cy="156.0" r="0.7"/><circle cx="350.2" cy="138.2" r="0.7"/><circle cx="365.5" cy="135.3" r="0.7"/><circle cx="370.8" cy="149.2" r="0.7"/><circle cx="402.8" cy="128.2" r="0.7"/><circle cx="418.7" cy="124.6" r="0.7"/><circle cx="399.8" cy="141.4" r="0.7"/><circle cx="415.8" cy="138.8" r="0.7"/><circle cx="398.0" cy="153.6" r="0.7"/><circle cx="412.8" cy="150.1" r="0.7"/><circle cx="425.8" cy="155.4" r="0.7"/><circle cx="396.3" cy="165.8" r="0.7"/><circle cx="411.0" cy="163.1" r="0.7"/><circle cx="422.3" cy="169.6" r="0.7"/><circle cx="406.9" cy="174.9" r="0.7"/><circle cx="421.1" cy="182.6" r="0.7"/><circle cx="407.5" cy="188.5" r="0.7"/><circle cx="418.7" cy="194.4" r="0.7"/><circle cx="385.0" cy="196.7" r="0.7"/><circle cx="222.5" cy="212.7" r="0.7"/><circle cx="237.9" cy="214.5" r="0.7"/><circle cx="247.3" cy="212.7" r="0.7"/><circle cx="263.9" cy="212.1" r="0.7"/><circle cx="274.5" cy="212.7" r="0.7"/><circle cx="288.7" cy="213.3" r="0.7"/><circle cx="302.9" cy="213.3" r="0.7"/><circle cx="314.7" cy="212.7" r="0.7"/><circle cx="329.5" cy="214.2" r="0.7"/><circle cx="353.7" cy="213.3" r="0.7"/><circle cx="382.1" cy="212.1" r="0.7"/><circle cx="407.5" cy="213.3" r="0.7"/><circle cx="416.4" cy="214.2" r="0.7"/><circle cx="375.0" cy="118.5" r="0.7"/><circle cx="386.2" cy="115.2" r="0.7"/><circle cx="407.5" cy="117.5" r="0.7"/><circle cx="424.0" cy="115.2" r="0.7"/><circle cx="208.8" cy="124.0" r="0.7"/><circle cx="192.8" cy="138.8" r="0.7"/><circle cx="173.9" cy="156.6" r="0.7"/><circle cx="160.9" cy="174.9" r="0.7"/><circle cx="191.6" cy="177.2" r="0.7"/><circle cx="185.1" cy="184.9" r="0.7"/><circle cx="208.2" cy="160.1" r="0.7"/><circle cx="221.2" cy="164.2" r="0.7"/><circle cx="218.2" cy="183.7" r="0.7"/><circle cx="156.8" cy="192.0" r="0.7"/><circle cx="184.5" cy="194.4" r="0.7"/><circle cx="197.5" cy="192.0" r="0.7"/><circle cx="210.5" cy="192.6" r="0.7"/><circle cx="221.8" cy="192.0" r="0.7"/><circle cx="158.5" cy="211.5" r="0.7"/><circle cx="183.9" cy="211.5" r="0.7"/><circle cx="195.8" cy="211.5" r="0.7"/><circle cx="208.8" cy="212.7" r="0.7"/><circle cx="221.2" cy="212.7" r="0.7"/><circle cx="91.5" cy="69.1" r="0.7"/></g><g stroke="#333" stroke-width="0.9" fill="none"><path d="M383 102H389M384 102V104M388 102V104"/><path d="M418 114H424M419 114V116M423 114V116"/><path d="M406 143H412M407 143V145M411 143V145"/><path d="M428 183H434M429 183V185M433 183V185"/><path d="M228 199H234M229 199V201M233 199V201"/><path d="M248 195H254M249 195V197M253 195V197"/><path d="M203 193H209M204 193V195M208 193V195"/><path d="M280 192H286M281 192V194M285 192V194"/><path d="M293 195H299M294 195V197M298 195V197"/><path d="M165 198H171M166 198V200M170 198V200"/><path d="M396 217H402M397 217V219M401 217V219"/><path d="M421 221H427M422 221V223M426 221V223"/><path d="M335 208H341M336 208V210M340 208V210"/><path d="M360 194H366M361 194V196M365 194V196"/><path d="M381 189H387M382 189V191M386 189V191"/></g><text x="239.0" y="32.0" fill="#b565b8" font-size="6.5" text-anchor="middle" font-family="Liberation Sans" >Aquarela</text><text x="192.0" y="74.0" fill="#b565b8" font-size="6.5" text-anchor="middle" font-family="Liberation Sans" >Josep Maria</text><text x="192.0" y="81.0" fill="#b565b8" font-size="6.5" text-anchor="middle" font-family="Liberation Sans" >Font</text><text x="27.0" y="85.0" fill="#b565b8" font-size="6.5" text-anchor="middle" font-family="Liberation Sans" >Krakopak</text><text x="39.0" y="105.0" fill="#b565b8" font-size="6.5" text-anchor="middle" font-family="Liberation Sans" >Krakovia</text><text x="64.0" y="127.0" fill="#b565b8" font-size="6.5" text-anchor="middle" font-family="Liberation Sans" >Supermercat</text><text x="64.0" y="134.0" fill="#b565b8" font-size="6.5" text-anchor="middle" font-family="Liberation Sans" >Sicilia</text><text x="119.0" y="135.0" fill="#b565b8" font-size="6.5" text-anchor="middle" font-family="Liberation Sans" >Jordi</text><text x="151.0" y="136.0" fill="#555" font-size="6.5" text-anchor="middle" font-family="Liberation Sans" >Euronet</text><text x="151.0" y="143.0" fill="#555" font-size="6.5" text-anchor="middle" font-family="Liberation Sans" >Worldwide</text><text x="90.0" y="149.0" fill="#c9771e" font-size="6.5" text-anchor="middle" font-family="Liberation Sans" >Fernandes</text><text x="29.0" y="186.0" fill="#c9771e" font-size="6.5" text-anchor="middle" font-family="Liberation Sans" >La Pasteler&#237;a</text><text x="174.0" y="8.0" fill="#777" font-size="5.5" text-anchor="middle" font-family="Liberation Sans" >14</text><text x="224.0" y="47.0" fill="#777" font-size="5.5" text-anchor="middle" font-family="Liberation Sans" >409-411</text><text x="186.0" y="94.0" fill="#777" font-size="5.5" text-anchor="middle" font-family="Liberation Sans" >10</text><text x="172.0" y="106.0" fill="#777" font-size="5.5" text-anchor="middle" font-family="Liberation Sans" >407</text><text x="6.0" y="131.0" fill="#777" font-size="5.5" text-anchor="middle" font-family="Liberation Sans" >251</text><text x="33.0" y="165.0" fill="#777" font-size="5.5" text-anchor="middle" font-family="Liberation Sans" >246</text><text x="44.0" y="221.0" fill="#777" font-size="5.5" text-anchor="middle" font-family="Liberation Sans" >257</text><text x="364.0" y="197.0" fill="#4a7a4a" font-size="8.5" text-anchor="middle" font-family="Liberation Sans" font-style="italic">Pla&#231;a de</text><text x="364.0" y="207.0" fill="#4a7a4a" font-size="8.5" text-anchor="middle" font-family="Liberation Sans" font-style="italic">la Sagrada</text><text x="364.0" y="218.0" fill="#4a7a4a" font-size="8.5" text-anchor="middle" font-family="Liberation Sans" font-style="italic">Fam&#237;lia</text><text x="0" y="0" fill="#222" font-size="8" text-anchor="middle" font-family="Liberation Sans" transform="translate(240,74) rotate(-44)">Carrer de Proven&#231;a</text><text x="0" y="0" fill="#333" font-size="7.5" text-anchor="middle" font-family="Liberation Sans" transform="translate(364,24) rotate(-6)">Carrer de Sardenya</text><text x="0" y="0" fill="#333" font-size="7.5" text-anchor="middle" font-family="Liberation Sans" transform="translate(100,231) rotate(-44)">de Proven&#231;a</text><path d="M235 18L237.5 16.5H240.5L243 18L242 20H241V23.5H237V20H236Z" fill="#b565b8"/><path d="M115 120L117.5 118.5H120.5L123 120L122 122H121V125.5H117V122H116Z" fill="#b565b8"/><path d="M190 49.5H196L195 54.5H191Z" fill="#b565b8" opacity="0.85"/><path d="M190 60.5H196L195 65.5H191Z" fill="#b565b8" opacity="0.85"/><path d="M38 70.5H44L43 75.5H39Z" fill="#b565b8" opacity="0.85"/><path d="M37 91.5H43L42 96.5H38Z" fill="#b565b8" opacity="0.85"/><path d="M61 113.5H67L66 118.5H62Z" fill="#b565b8" opacity="0.85"/><rect x="86" y="134.5" width="6" height="5" fill="#c9771e" opacity="0.85"/><path d="M97 130.5H103L102 135.5H98Z" fill="#c9771e" opacity="0.85"/><rect x="183" y="92.5" width="6" height="5" fill="#c9771e" opacity="0.85"/><rect x="26" y="171.5" width="6" height="5" fill="#c9771e" opacity="0.85"/><rect x="147" y="123.5" width="6" height="5" fill="#6b4a2a" opacity="0.85"/><rect x="375" y="50.5" width="6" height="5" fill="#6b4a2a" opacity="0.85"/><text x="178" y="123" fill="#3d8fd6" font-size="9" text-anchor="middle" font-family="Liberation Sans">P</text><text x="26" y="152" fill="#3d8fd6" font-size="9" text-anchor="middle" font-family="Liberation Sans">P</text><text x="187" y="143" fill="#3d8fd6" font-size="9" text-anchor="middle" font-family="Liberation Sans">P</text><text x="172" y="176" fill="#3d8fd6" font-size="9" text-anchor="middle" font-family="Liberation Sans">P</text><text x="335" y="12" fill="#3d8fd6" font-size="9" text-anchor="middle" font-family="Liberation Sans">P</text><text x="378" y="5" fill="#3d8fd6" font-size="9" text-anchor="middle" font-family="Liberation Sans">P</text><path d="M142.4 93.9C136 84 123.8 72 123.8 61.2A18.6 18.6 0 0 1 161 61.2C161 72 148.8 84 142.4 93.9ZM142.3 51.7A8.5 8.5 0 1 0 142.31 51.7Z" fill="#5420b2" fill-rule="evenodd" stroke="#e6d8fb" stroke-width="0.8"/><rect x="390" y="15" width="38" height="73" rx="4" fill="#fff" stroke="rgba(0,0,0,0.22)" stroke-width="2"/><rect x="391" y="16" width="36" height="35" rx="3" fill="#f4f4f4"/><line x1="391" y1="51" x2="427" y2="51" stroke="#ccc" stroke-width="1"/><path d="M402.5 36H415.5M409 29.5V42.5" stroke="#bbb" stroke-width="2.2"/><path d="M403 72.5H415" stroke="#111" stroke-width="2.6"/><rect x="157" y="221" width="285" height="21" fill="rgba(255,255,255,0.82)"/><rect x="163" y="226" width="14" height="5" fill="#3b78d6"/><rect x="163" y="231" width="14" height="5" fill="#f4c21a"/><text x="182" y="235.5" font-size="13.6" font-family="Liberation Sans" fill="#0078a8" textLength="42" lengthAdjust="spacingAndGlyphs">Leaflet</text><text x="229" y="235.5" font-size="13.6" font-family="Liberation Sans" fill="#333">|</text><text x="235.5" y="235.5" font-size="13.6" font-family="Liberation Sans" fill="#333">&#169;</text><text x="251" y="235.5" font-size="13.6" font-family="Liberation Sans" fill="#0078a8" textLength="101" lengthAdjust="spacingAndGlyphs">OpenStreetMap</text><text x="357" y="235.5" font-size="13.6" font-family="Liberation Sans" fill="#333" textLength="77" lengthAdjust="spacingAndGlyphs">contributors</text></g></svg><div class="box" style="left:1313px;top:630px;width:444px;height:244px;border:2px solid #3561b0;border-radius:4px;z-index:12"></div><div class="t" style="left:1315.4px;top:895.2px;font-size:27.5px;font-weight:700;color:#2a2a2a;letter-spacing:1.19px;">Sigue la llegada de tu</div><div class="t" style="left:1315.4px;top:929.2px;font-size:27.5px;font-weight:700;color:#2a2a2a;letter-spacing:1.68px;">repartidor</div><div class="t" style="left:1315.4px;top:972.1px;font-size:15px;font-weight:400;color:#222;letter-spacing:0.48px;">&iexcl;Buenas noticias! Nuestro repartidor va en camino para</div><div class="t" style="left:1315.4px;top:993.1px;font-size:15px;font-weight:400;color:#222;letter-spacing:0.69px;">entregar tu paquete.</div><div class="t" style="left:1315.4px;top:1033.8px;font-size:15px;font-weight:400;color:#222;letter-spacing:0.47px;">Entrega prevista en</div><div class="t" style="left:1459.0px;top:1033.8px;font-size:15px;font-weight:700;color:#4b2a9c;letter-spacing:-0.10px;">10 minutos.</div><div class="t" style="left:1542.0px;top:1033.8px;font-size:15px;font-weight:400;color:#222;letter-spacing:0.00px;">.</div><div class="t" style="left:1315.4px;top:1074.5px;font-size:15px;font-weight:400;color:#777;letter-spacing:0.22px;">Fecha</div>
</div></div>
</body></html>
